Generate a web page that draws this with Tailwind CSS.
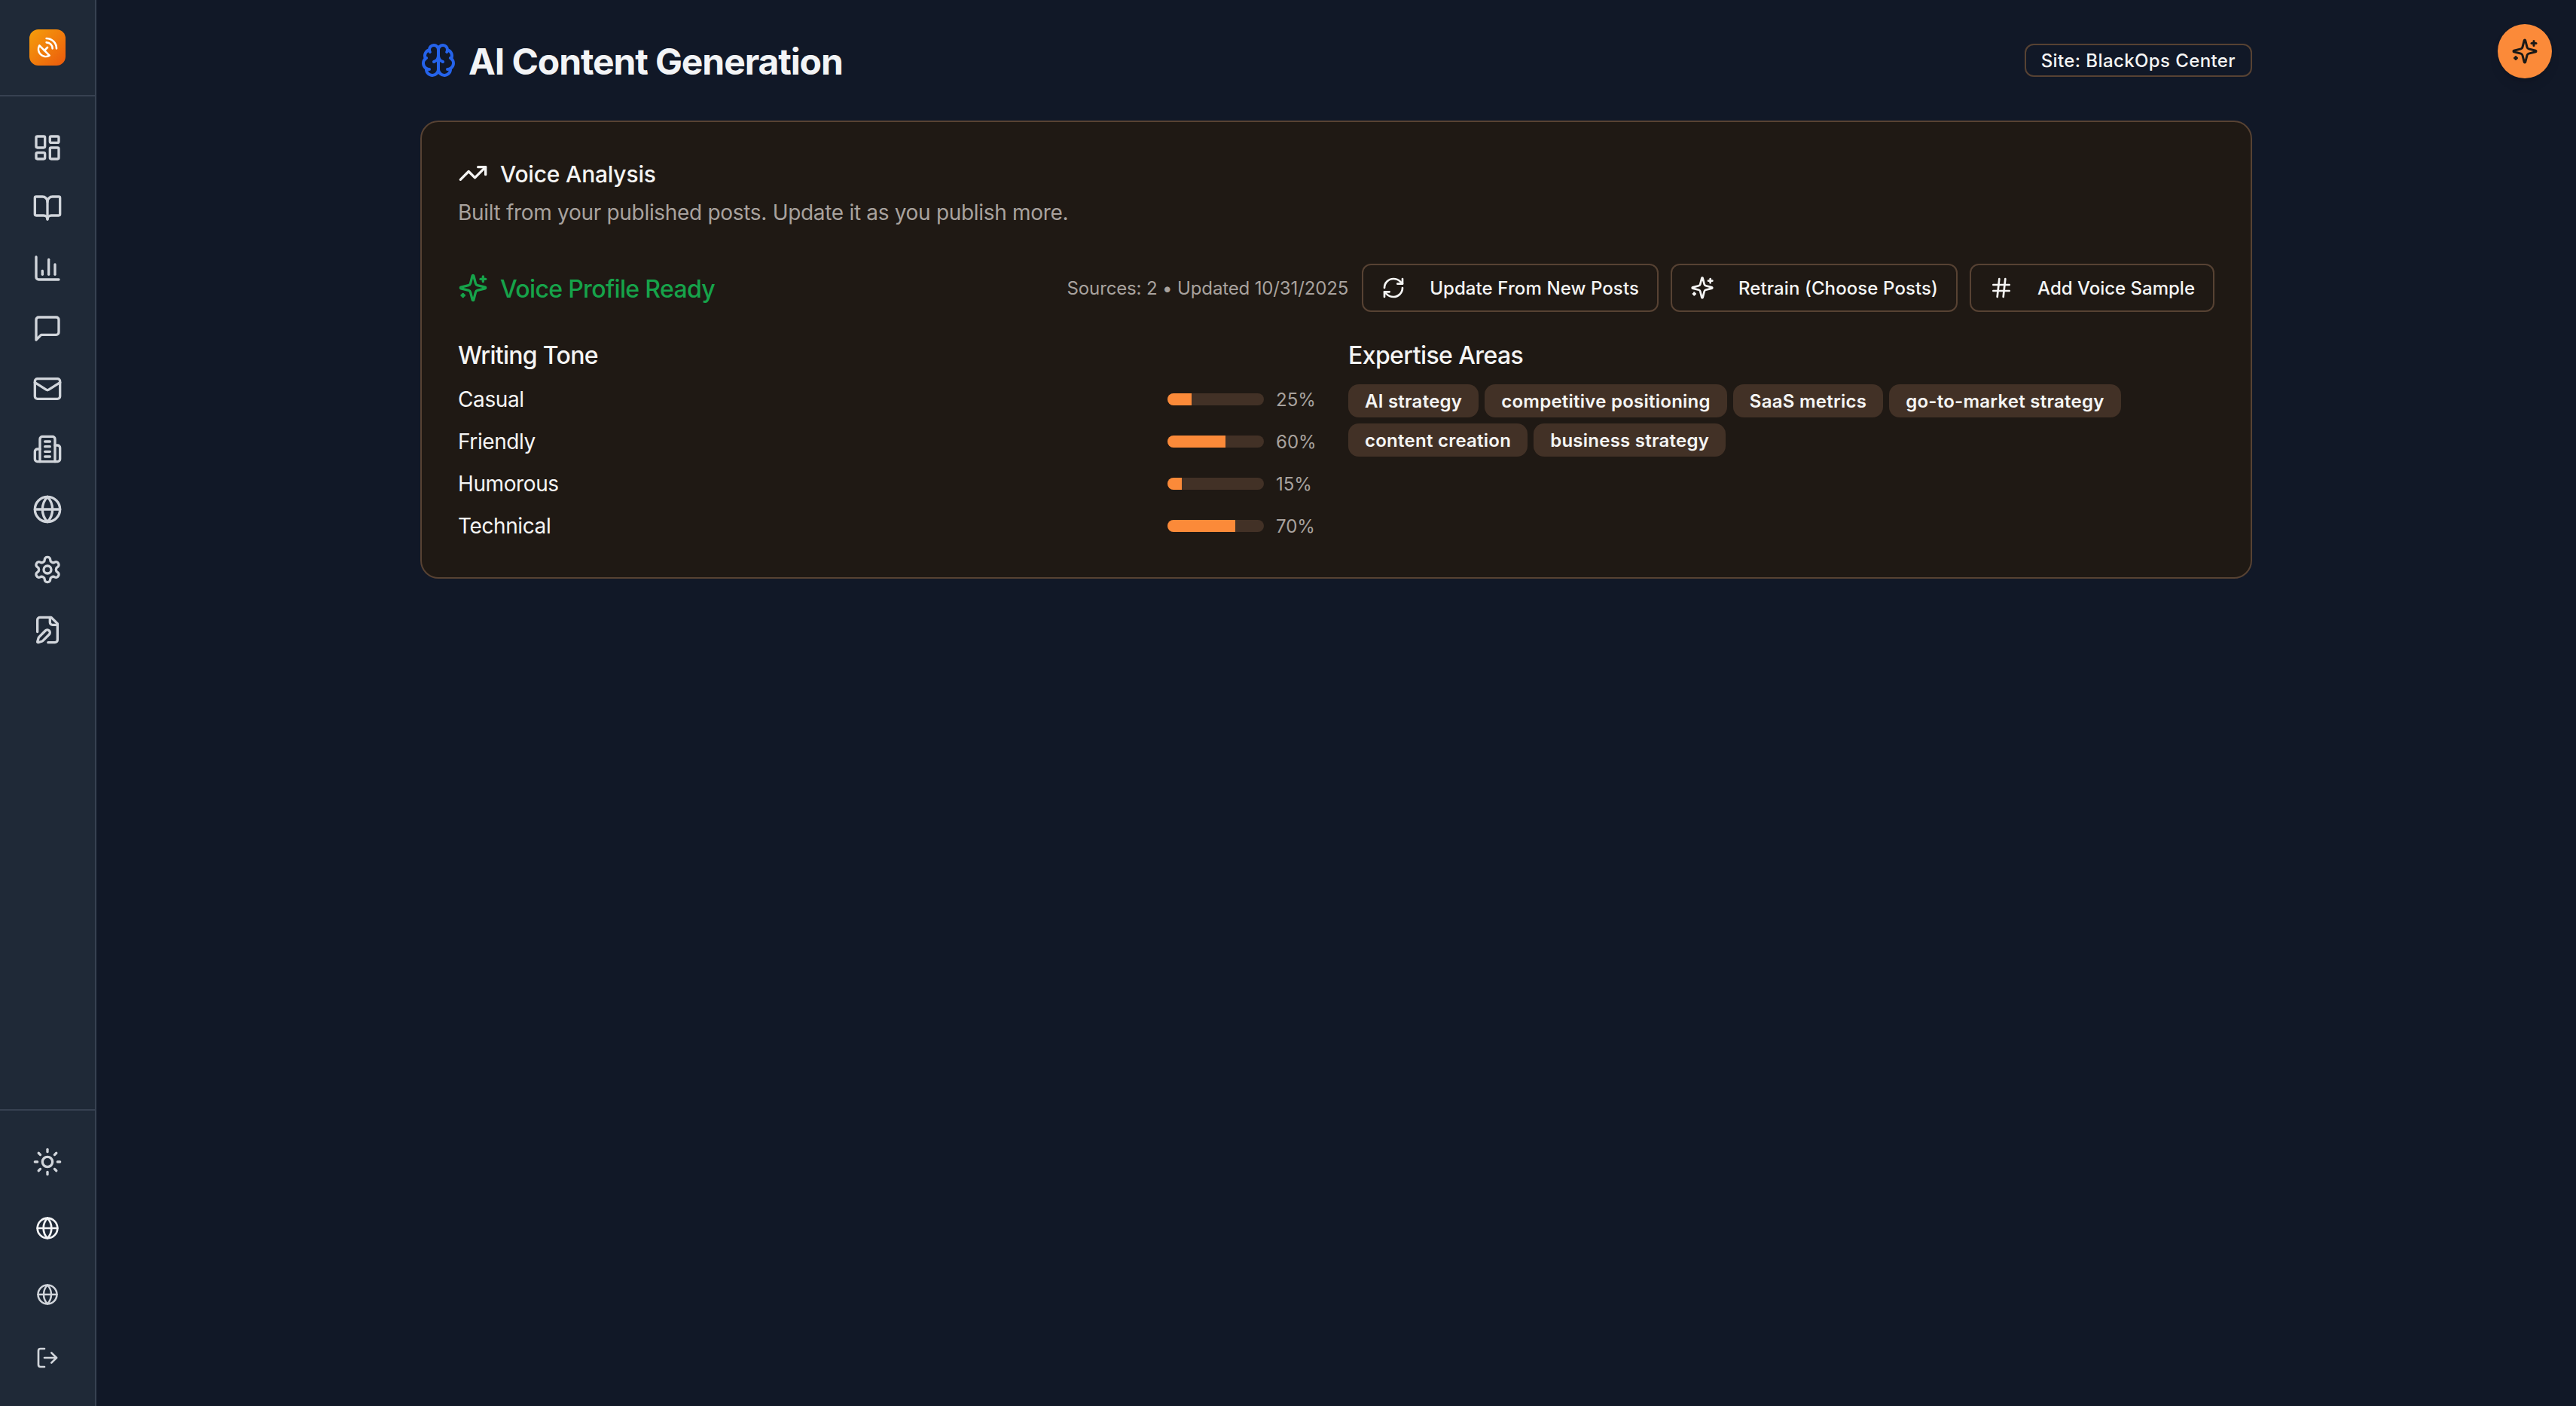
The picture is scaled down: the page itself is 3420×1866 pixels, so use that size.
<!DOCTYPE html>
<html lang="en">
  <head>
    <meta charset="UTF-8" />
    <meta name="viewport" content="width=device-width, initial-scale=1.0" />
    <title>AI Content Generation</title>
    <script src="https://cdn.jsdelivr.net/npm/@tailwindcss/browser@4"></script>
  </head>
  <body class="bg-[#111827] text-[#f5f5f4] h-screen overflow-hidden flex font-[family-name:Inter]">
    <!-- Sidebar -->
    <aside class="w-32 h-full shrink-0 bg-[#1f2937] border-r-2 border-[#374151] flex flex-col text-[#d1d5db]">
      <div class="h-32 shrink-0 border-b-2 border-[#374151] flex items-center justify-center">
        <div class="w-12 h-12 rounded-xl bg-gradient-to-br from-[#f59e0b] to-[#ea580c] flex items-center justify-center text-white">
          <svg class="w-8 h-8" viewBox="0 0 24 24" fill="none" stroke="currentColor" stroke-width="2" stroke-linecap="round" stroke-linejoin="round"><path d="M4 10a7.31 7.31 0 0 0 10 10Z"/><path d="m9 15 3-3"/><path d="M17 13a6 6 0 0 0-6-6"/><path d="M21 13A10 10 0 0 0 11 3"/></svg>
        </div>
      </div>
      <nav class="flex flex-col py-7">
        <a class="h-20 flex items-center justify-center"><svg class="w-10 h-10" viewBox="0 0 24 24" fill="none" stroke="currentColor" stroke-width="2" stroke-linecap="round" stroke-linejoin="round"><rect width="7" height="9" x="3" y="3" rx="1"/><rect width="7" height="5" x="14" y="3" rx="1"/><rect width="7" height="9" x="14" y="12" rx="1"/><rect width="7" height="5" x="3" y="16" rx="1"/></svg></a>
        <a class="h-20 flex items-center justify-center"><svg class="w-10 h-10" viewBox="0 0 24 24" fill="none" stroke="currentColor" stroke-width="2" stroke-linecap="round" stroke-linejoin="round"><path d="M12 7v14"/><path d="M3 18a1 1 0 0 1-1-1V4a1 1 0 0 1 1-1h5a4 4 0 0 1 4 4 4 4 0 0 1 4-4h5a1 1 0 0 1 1 1v13a1 1 0 0 1-1 1h-6a3 3 0 0 0-3 3 3 3 0 0 0-3-3z"/></svg></a>
        <a class="h-20 flex items-center justify-center"><svg class="w-10 h-10" viewBox="0 0 24 24" fill="none" stroke="currentColor" stroke-width="2" stroke-linecap="round" stroke-linejoin="round"><path d="M3 3v16a2 2 0 0 0 2 2h16"/><path d="M18 17V9"/><path d="M13 17V5"/><path d="M8 17v-3"/></svg></a>
        <a class="h-20 flex items-center justify-center"><svg class="w-10 h-10" viewBox="0 0 24 24" fill="none" stroke="currentColor" stroke-width="2" stroke-linecap="round" stroke-linejoin="round"><path d="M21 15a2 2 0 0 1-2 2H7l-4 4V5a2 2 0 0 1 2-2h14a2 2 0 0 1 2 2z"/></svg></a>
        <a class="h-20 flex items-center justify-center"><svg class="w-10 h-10" viewBox="0 0 24 24" fill="none" stroke="currentColor" stroke-width="2" stroke-linecap="round" stroke-linejoin="round"><rect width="20" height="16" x="2" y="4" rx="2"/><path d="m22 7-8.97 5.7a1.94 1.94 0 0 1-2.06 0L2 7"/></svg></a>
        <a class="h-20 flex items-center justify-center"><svg class="w-10 h-10" viewBox="0 0 24 24" fill="none" stroke="currentColor" stroke-width="2" stroke-linecap="round" stroke-linejoin="round"><path d="M6 22V4a2 2 0 0 1 2-2h8a2 2 0 0 1 2 2v18Z"/><path d="M6 12H4a2 2 0 0 0-2 2v6a2 2 0 0 0 2 2h2"/><path d="M18 9h2a2 2 0 0 1 2 2v9a2 2 0 0 1-2 2h-2"/><path d="M10 6h4"/><path d="M10 10h4"/><path d="M10 14h4"/><path d="M10 18h4"/></svg></a>
        <a class="h-20 flex items-center justify-center"><svg class="w-10 h-10" viewBox="0 0 24 24" fill="none" stroke="currentColor" stroke-width="2" stroke-linecap="round" stroke-linejoin="round"><circle cx="12" cy="12" r="10"/><path d="M12 2a14.5 14.5 0 0 0 0 20 14.5 14.5 0 0 0 0-20"/><path d="M2 12h20"/></svg></a>
        <a class="h-20 flex items-center justify-center"><svg class="w-10 h-10" viewBox="0 0 24 24" fill="none" stroke="currentColor" stroke-width="2" stroke-linecap="round" stroke-linejoin="round"><path d="M12.22 2h-.44a2 2 0 0 0-2 2v.18a2 2 0 0 1-1 1.73l-.43.25a2 2 0 0 1-2 0l-.15-.08a2 2 0 0 0-2.73.73l-.22.38a2 2 0 0 0 .73 2.73l.15.1a2 2 0 0 1 1 1.72v.51a2 2 0 0 1-1 1.74l-.15.09a2 2 0 0 0-.73 2.73l.22.38a2 2 0 0 0 2.73.73l.15-.08a2 2 0 0 1 2 0l.43.25a2 2 0 0 1 1 1.73V20a2 2 0 0 0 2 2h.44a2 2 0 0 0 2-2v-.18a2 2 0 0 1 1-1.73l.43-.25a2 2 0 0 1 2 0l.15.08a2 2 0 0 0 2.73-.73l.22-.39a2 2 0 0 0-.73-2.73l-.15-.08a2 2 0 0 1-1-1.74v-.5a2 2 0 0 1 1-1.74l.15-.09a2 2 0 0 0 .73-2.73l-.22-.38a2 2 0 0 0-2.73-.73l-.15.08a2 2 0 0 1-2 0l-.43-.25a2 2 0 0 1-1-1.73V4a2 2 0 0 0-2-2z"/><circle cx="12" cy="12" r="3"/></svg></a>
        <a class="h-20 flex items-center justify-center"><svg class="w-10 h-10" viewBox="0 0 24 24" fill="none" stroke="currentColor" stroke-width="2" stroke-linecap="round" stroke-linejoin="round"><path d="M12.5 22H18a2 2 0 0 0 2-2V7l-5-5H6a2 2 0 0 0-2 2v9.5"/><path d="M14 2v4a2 2 0 0 0 2 2h4"/><path d="M13.378 15.626a1 1 0 1 0-3.004-3.004l-5.01 5.012a2 2 0 0 0-.506.854l-.837 2.87a.5.5 0 0 0 .62.62l2.87-.837a2 2 0 0 0 .854-.506z"/></svg></a>
      </nav>
      <div class="mt-auto border-t-2 border-[#374151] pt-7 pb-5 flex flex-col">
        <a class="h-20 flex items-center justify-center"><svg class="w-10 h-10" viewBox="0 0 24 24" fill="none" stroke="currentColor" stroke-width="2" stroke-linecap="round" stroke-linejoin="round"><circle cx="12" cy="12" r="4"/><path d="M12 2v2"/><path d="M12 20v2"/><path d="m4.93 4.93 1.41 1.41"/><path d="m17.66 17.66 1.41 1.41"/><path d="M2 12h2"/><path d="M20 12h2"/><path d="m6.34 17.66-1.41 1.41"/><path d="m19.07 4.93-1.41 1.41"/></svg></a>
        <a class="h-24 flex items-center justify-center text-[#f3f4f6]"><svg class="w-8 h-8" viewBox="0 0 24 24" fill="none" stroke="currentColor" stroke-width="2" stroke-linecap="round" stroke-linejoin="round"><circle cx="12" cy="12" r="10"/><path d="M12 2a14.5 14.5 0 0 0 0 20 14.5 14.5 0 0 0 0-20"/><path d="M2 12h20"/></svg></a>
        <a class="h-20 flex items-center justify-center"><svg class="w-[30px] h-[30px]" viewBox="0 0 24 24" fill="none" stroke="currentColor" stroke-width="2" stroke-linecap="round" stroke-linejoin="round"><circle cx="12" cy="12" r="10"/><path d="M12 2a14.5 14.5 0 0 0 0 20 14.5 14.5 0 0 0 0-20"/><path d="M2 12h20"/></svg></a>
        <a class="h-[88px] flex items-center justify-center"><svg class="w-8 h-8" viewBox="0 0 24 24" fill="none" stroke="currentColor" stroke-width="2" stroke-linecap="round" stroke-linejoin="round"><path d="M9 21H5a2 2 0 0 1-2-2V5a2 2 0 0 1 2-2h4"/><path d="m16 17 5-5-5-5"/><path d="M21 12H9"/></svg></a>
      </div>
    </aside>

    <!-- Main -->
    <main class="flex-1 min-w-0 pt-12 flex flex-col items-center">
      <div class="w-[2432px]">
        <header class="h-16 flex items-center justify-between mb-12">
          <div class="flex items-center gap-4">
            <svg class="w-12 h-12 text-[#2563eb]" viewBox="0 0 24 24" fill="none" stroke="currentColor" stroke-width="2" stroke-linecap="round" stroke-linejoin="round"><path d="M12 5a3 3 0 1 0-5.997.125 4 4 0 0 0-2.526 5.77 4 4 0 0 0 .556 6.588A4 4 0 1 0 12 18Z"/><path d="M12 5a3 3 0 1 1 5.997.125 4 4 0 0 1 2.526 5.77 4 4 0 0 1-.556 6.588A4 4 0 1 1 12 18Z"/><path d="M15 13a4.5 4.5 0 0 1-3-4 4.5 4.5 0 0 1-3 4"/><path d="M17.599 6.5a3 3 0 0 0 .399-1.375"/><path d="M6.003 5.125A3 3 0 0 0 6.401 6.5"/><path d="M3.477 10.896a4 4 0 0 1 .585-.396"/><path d="M19.938 10.5a4 4 0 0 1 .585.396"/><path d="M6 18a4 4 0 0 1-1.967-.516"/><path d="M19.967 17.484A4 4 0 0 1 18 18"/></svg>
            <h1 class="pt-1 text-5xl font-bold tracking-[-1.1px] leading-none text-[#f3f4f6]">AI Content Generation</h1>
          </div>
          <span class="h-11 pt-[2px] px-[20px] flex items-center rounded-xl border-2 border-[#574233] text-2xl font-medium tracking-[0.4px] text-[#f5f5f4]">Site: BlackOps Center</span>
        </header>

        <section class="h-[608px] rounded-3xl border-2 border-[#574233] bg-[#1f1914] p-12">
          <div class="flex items-center gap-4 h-10">
            <svg class="w-10 h-10" viewBox="0 0 24 24" fill="none" stroke="currentColor" stroke-width="2" stroke-linecap="round" stroke-linejoin="round"><polyline points="22 7 13.5 15.5 8.5 10.5 2 17"/><polyline points="16 7 22 7 22 13"/></svg>
            <h2 class="pt-[2px] text-[30px] leading-10 font-medium tracking-[-0.2px]">Voice Analysis</h2>
          </div>
          <p class="mt-3 text-[28px] leading-10 tracking-[-0.31px] text-[#a8a29e]">Built from your published posts. Update it as you publish more.</p>

          <div class="mt-12 h-16 flex items-center justify-between">
            <div class="flex items-center gap-4 text-[#16a34a]">
              <svg class="w-10 h-10" viewBox="0 0 24 24" fill="none" stroke="currentColor" stroke-width="2" stroke-linecap="round" stroke-linejoin="round"><path d="M9.937 15.5A2 2 0 0 0 8.5 14.063l-6.135-1.582a.5.5 0 0 1 0-.962L8.5 9.936A2 2 0 0 0 9.937 8.5l1.582-6.135a.5.5 0 0 1 .963 0L14.063 8.5A2 2 0 0 0 15.5 9.937l6.135 1.581a.5.5 0 0 1 0 .964L15.5 14.063a2 2 0 0 0-1.437 1.437l-1.582 6.135a.5.5 0 0 1-.963 0z"/><path d="M20 3v4"/><path d="M22 5h-4"/><path d="M4 17v2"/><path d="M5 18H3"/></svg>
              <span class="pt-[4px] text-[32px] font-medium tracking-[-0.65px]">Voice Profile Ready</span>
            </div>
            <div class="flex items-center gap-4">
              <span class="pt-[2px] mr-[2px] text-2xl tracking-[-0.14px] text-[#a8a29e]">Sources: 2 • Updated 10/31/2025</span>
              <button class="h-16 px-6 flex items-center gap-8 rounded-xl border-2 border-[#574233] text-2xl font-medium tracking-[0.1px]">
                <svg class="w-8 h-8" viewBox="0 0 24 24" fill="none" stroke="currentColor" stroke-width="2" stroke-linecap="round" stroke-linejoin="round"><path d="M3 12a9 9 0 0 1 9-9 9.75 9.75 0 0 1 6.74 2.74L21 8"/><path d="M21 3v5h-5"/><path d="M21 12a9 9 0 0 1-9 9 9.75 9.75 0 0 1-6.74-2.74L3 16"/><path d="M8 16H3v5"/></svg>
                <span class="pt-[2px]">Update From New Posts</span>
              </button>
              <button class="h-16 px-6 flex items-center gap-8 rounded-xl border-2 border-[#574233] text-2xl font-medium tracking-[0.1px]">
                <svg class="w-8 h-8" viewBox="0 0 24 24" fill="none" stroke="currentColor" stroke-width="2" stroke-linecap="round" stroke-linejoin="round"><path d="M9.937 15.5A2 2 0 0 0 8.5 14.063l-6.135-1.582a.5.5 0 0 1 0-.962L8.5 9.936A2 2 0 0 0 9.937 8.5l1.582-6.135a.5.5 0 0 1 .963 0L14.063 8.5A2 2 0 0 0 15.5 9.937l6.135 1.581a.5.5 0 0 1 0 .964L15.5 14.063a2 2 0 0 0-1.437 1.437l-1.582 6.135a.5.5 0 0 1-.963 0z"/><path d="M20 3v4"/><path d="M22 5h-4"/><path d="M4 17v2"/><path d="M5 18H3"/></svg>
                <span class="pt-[2px]">Retrain (Choose Posts)</span>
              </button>
              <button class="h-16 px-6 flex items-center gap-8 rounded-xl border-2 border-[#574233] text-2xl font-medium">
                <svg class="w-8 h-8" viewBox="0 0 24 24" fill="none" stroke="currentColor" stroke-width="2" stroke-linecap="round" stroke-linejoin="round"><line x1="4" x2="20" y1="9" y2="9"/><line x1="4" x2="20" y1="15" y2="15"/><line x1="10" x2="8" y1="3" y2="21"/><line x1="16" x2="14" y1="3" y2="21"/></svg>
                <span class="pt-[2px]">Add Voice Sample</span>
              </button>
            </div>
          </div>

          <div class="mt-8 grid grid-cols-2 gap-8">
            <div>
              <h3 class="pt-[2px] text-[32px] leading-12 font-medium tracking-[-0.7px] mb-[14px]">Writing Tone</h3>
              <div class="flex flex-col gap-4 text-[28px] leading-10 tracking-[-0.4px]">
                <div class="flex items-center gap-4">
                  <span class="flex-1">Casual</span>
                  <div class="w-32 h-4 rounded-full overflow-hidden bg-[#423126]"><div class="h-full bg-[#fb8a39]" style="width: 25%"></div></div>
                  <span class="w-16 pt-[2px] text-2xl tracking-normal text-[#a8a29e]">25%</span>
                </div>
                <div class="flex items-center gap-4">
                  <span class="flex-1">Friendly</span>
                  <div class="w-32 h-4 rounded-full overflow-hidden bg-[#423126]"><div class="h-full bg-[#fb8a39]" style="width: 60%"></div></div>
                  <span class="w-16 pt-[2px] text-2xl tracking-normal text-[#a8a29e]">60%</span>
                </div>
                <div class="flex items-center gap-4">
                  <span class="flex-1">Humorous</span>
                  <div class="w-32 h-4 rounded-full overflow-hidden bg-[#423126]"><div class="h-full bg-[#fb8a39]" style="width: 15%"></div></div>
                  <span class="w-16 pt-[2px] text-2xl tracking-normal text-[#a8a29e]">15%</span>
                </div>
                <div class="flex items-center gap-4">
                  <span class="flex-1">Technical</span>
                  <div class="w-32 h-4 rounded-full overflow-hidden bg-[#423126]"><div class="h-full bg-[#fb8a39]" style="width: 70%"></div></div>
                  <span class="w-16 pt-[2px] text-2xl tracking-normal text-[#a8a29e]">70%</span>
                </div>
              </div>
            </div>
            <div>
              <h3 class="pt-[2px] text-[32px] leading-12 font-medium tracking-[-0.6px] mb-[14px]">Expertise Areas</h3>
              <div class="flex flex-wrap gap-2">
                <span class="h-11 pt-[2px] px-[22px] flex items-center rounded-[14px] bg-[#423126] text-2xl font-semibold tracking-[0.25px]">AI strategy</span>
                <span class="h-11 pt-[2px] px-[22px] flex items-center rounded-[14px] bg-[#423126] text-2xl font-semibold tracking-[0.25px]">competitive positioning</span>
                <span class="h-11 pt-[2px] px-[22px] flex items-center rounded-[14px] bg-[#423126] text-2xl font-semibold tracking-[0.25px]">SaaS metrics</span>
                <span class="h-11 pt-[2px] px-[22px] flex items-center rounded-[14px] bg-[#423126] text-2xl font-semibold tracking-[0.25px]">go-to-market strategy</span>
                <span class="h-11 pt-[2px] px-[22px] flex items-center rounded-[14px] bg-[#423126] text-2xl font-semibold tracking-[0.25px]">content creation</span>
                <span class="h-11 pt-[2px] px-[22px] flex items-center rounded-[14px] bg-[#423126] text-2xl font-semibold tracking-[0.25px]">business strategy</span>
              </div>
            </div>
          </div>
        </section>
      </div>
    </main>

    <!-- Assistant button -->
    <button class="absolute top-8 right-8 w-[72px] h-[72px] rounded-full bg-[#fb8a39] shadow-lg flex items-center justify-center text-[#1c1917]">
      <svg class="w-9 h-9" viewBox="0 0 24 24" fill="none" stroke="currentColor" stroke-width="2" stroke-linecap="round" stroke-linejoin="round"><path d="M9.937 15.5A2 2 0 0 0 8.5 14.063l-6.135-1.582a.5.5 0 0 1 0-.962L8.5 9.936A2 2 0 0 0 9.937 8.5l1.582-6.135a.5.5 0 0 1 .963 0L14.063 8.5A2 2 0 0 0 15.5 9.937l6.135 1.581a.5.5 0 0 1 0 .964L15.5 14.063a2 2 0 0 0-1.437 1.437l-1.582 6.135a.5.5 0 0 1-.963 0z"/><path d="M20 3v4"/><path d="M22 5h-4"/><path d="M4 17v2"/><path d="M5 18H3"/></svg>
    </button>
  </body>
</html>
